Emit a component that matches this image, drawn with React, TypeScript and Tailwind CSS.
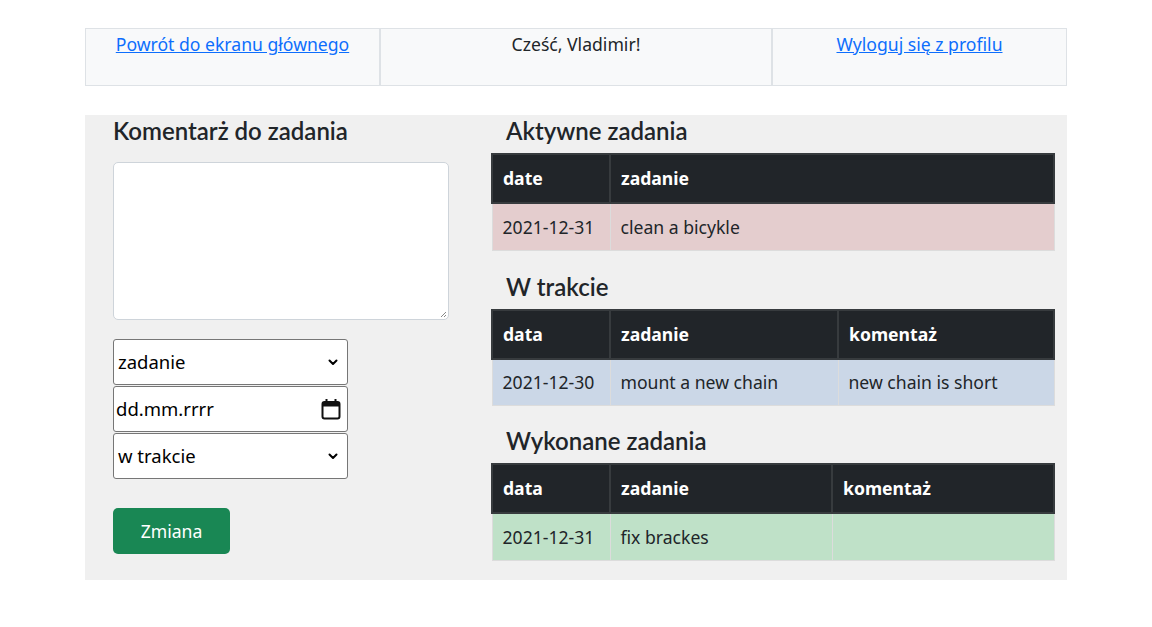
import React from "react";

const Chevron = () => (
  <svg width="12" height="12" viewBox="0 0 12 12" className="text-black">
    <path d="M2.5 4.5 L6 8 L9.5 4.5" fill="none" stroke="currentColor" strokeWidth="2" strokeLinecap="round" strokeLinejoin="round" />
  </svg>
);

const CalendarIcon = () => (
  <svg width="20" height="22" viewBox="0 0 20 22">
    <rect x="1.5" y="4" width="17" height="16.5" rx="2" fill="none" stroke="#111" strokeWidth="2" />
    <rect x="1.5" y="4" width="17" height="4.5" fill="#111" />
    <rect x="4.5" y="1" width="2" height="4" fill="#111" />
    <rect x="13.5" y="1" width="2" height="4" fill="#111" />
  </svg>
);

function Heading({ children, className = "" }: { children: React.ReactNode; className?: string }) {
  return (
    <h4
      className={"text-[24px] font-semibold leading-[31px] text-[#212529] " + className}
      style={{ fontFamily: 'Lato, "Noto Sans", sans-serif' }}
    >
      {children}
    </h4>
  );
}

type Col = { label: string; w: string };

function DataTable({
  cols,
  row,
  rowBg,
  className = "",
}: {
  cols: Col[];
  row: string[];
  rowBg: string;
  className?: string;
}) {
  return (
    <table className={"w-[562px] border-collapse table-fixed " + className}>
      <colgroup>
        {cols.map((c, i) => (
          <col key={i} className={c.w} />
        ))}
      </colgroup>
      <thead>
        <tr className="h-[49px] bg-[#212529]">
          {cols.map((c, i) => (
            <th
              key={i}
              className="border-2 border-[#373b3e] text-left font-bold text-white text-[17.6px] pl-[10px] py-0"
            >
              {c.label}
            </th>
          ))}
        </tr>
      </thead>
      <tbody>
        <tr className={"h-[47px] " + rowBg}>
          {row.map((v, i) => (
            <td key={i} className="border border-[#dcdcdc] pl-[10px] py-0 text-[17.6px] text-[#212529] whitespace-nowrap">
              {v}
            </td>
          ))}
        </tr>
      </tbody>
    </table>
  );
}

export default function App() {
  return (
    <div className="min-h-[627px] bg-white pt-[28px]" style={{ fontFamily: '"Noto Sans", "Open Sans", sans-serif' }}>
      <div className="mx-auto w-[982px]">
        {/* Top bar */}
        <div className="flex h-[58px] text-[17.6px] leading-[26px]">
          <div className="w-[295px] border border-[#dee2e6] bg-[#f8f9fa] pt-[2px] text-center">
            <a href="#" className="text-[#0d6efd] underline">Powrót do ekranu głównego</a>
          </div>
          <div className="w-[392px] border border-[#dee2e6] bg-[#f8f9fa] pt-[2px] text-center text-[#212529]">
            Cześć, Vladimir!
          </div>
          <div className="w-[295px] border border-[#dee2e6] bg-[#f8f9fa] pt-[2px] text-center">
            <a href="#" className="text-[#0d6efd] underline">Wyloguj się z profilu</a>
          </div>
        </div>

        {/* Main panel */}
        <div className="mt-[29px] flex bg-[#f0f0f0] pl-[28px] pr-[14px] pb-[19px]">
          {/* Left column */}
          <div className="w-[336px] flex flex-col">
            <Heading>Komentarż do zadania</Heading>
            <div className="mt-[16px] h-[158px] w-[336px] rounded-[5px] border border-[#ced4da] bg-white relative">
              <svg className="absolute right-[1px] bottom-[1px]" width="7" height="7" viewBox="0 0 7 7">
                <path d="M6 1 L1 6 M6 4 L4 6" stroke="#888" strokeWidth="1" />
              </svg>
            </div>
            <div className="mt-[19px] flex flex-col gap-[1px] w-[235px] text-[18.5px] text-black">
              <div className="h-[46px] rounded-[3px] border border-[#767676] bg-white flex items-center justify-between pl-[4px] pr-[8px]">
                <span>zadanie</span>
                <Chevron />
              </div>
              <div className="h-[46px] rounded-[3px] border border-[#767676] bg-white flex items-center justify-between pl-[2px] pr-[6px]">
                <span>dd.mm.rrrr</span>
                <CalendarIcon />
              </div>
              <div className="h-[46px] rounded-[3px] border border-[#767676] bg-white flex items-center justify-between pl-[4px] pr-[8px]">
                <span>w trakcie</span>
                <Chevron />
              </div>
            </div>
            <button className="mt-[29px] h-[46px] w-[117px] rounded-[5px] bg-[#198754] text-white text-[17.6px]">
              Zmiana
            </button>
          </div>

          {/* Right column */}
          <div className="ml-[42px] w-[562px] flex flex-col">
            <Heading className="pl-[15px]">Aktywne zadania</Heading>
            <DataTable
              className="mt-[7px]"
              cols={[
                { label: "date", w: "w-[118px]" },
                { label: "zadanie", w: "w-[444px]" },
              ]}
              row={["2021-12-31", "clean a bicykle"]}
              rowBg="bg-[#e4cdce]"
            />
            <Heading className="pl-[15px] mt-[20px]">W trakcie</Heading>
            <DataTable
              className="mt-[7px]"
              cols={[
                { label: "data", w: "w-[118px]" },
                { label: "zadanie", w: "w-[228px]" },
                { label: "komentaż", w: "w-[216px]" },
              ]}
              row={["2021-12-30", "mount a new chain", "new chain is short"]}
              rowBg="bg-[#cbd7e7]"
            />
            <Heading className="pl-[15px] mt-[19px]">Wykonane zadania</Heading>
            <DataTable
              className="mt-[7px]"
              cols={[
                { label: "data", w: "w-[118px]" },
                { label: "zadanie", w: "w-[222px]" },
                { label: "komentaż", w: "w-[222px]" },
              ]}
              row={["2021-12-31", "fix brackes", ""]}
              rowBg="bg-[#bfe1c8]"
            />
          </div>
        </div>
      </div>
    </div>
  );
}
